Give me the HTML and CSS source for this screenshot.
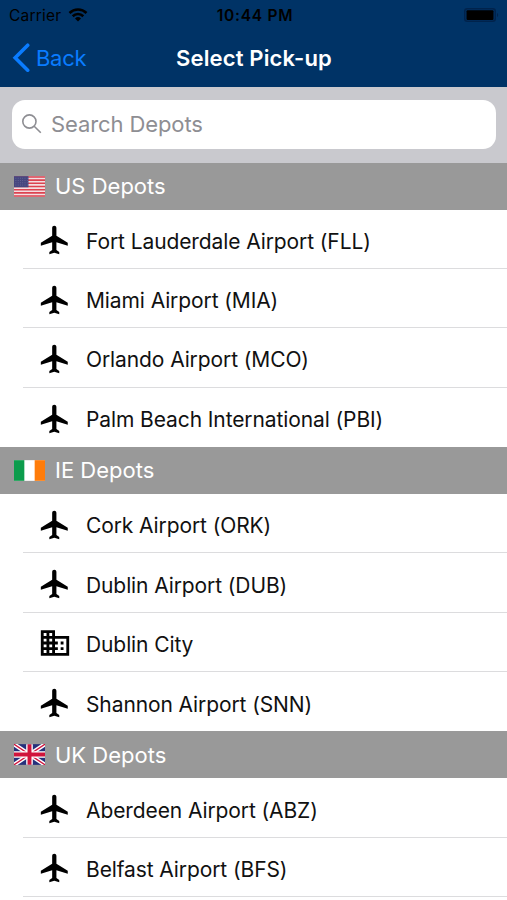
FILE: index.html
```html
<!DOCTYPE html>
<html lang="en">
<head>
    <meta charset="UTF-8">
    <meta name="viewport" content="width=device-width, initial-scale=1.0">
    <title>Select Pick-up</title>
    <link rel="stylesheet" href="styles.css">
</head>
<body>

    <svg class="sprite">
        <symbol id="plane" viewBox="0 0 24 24">
            <path d="M21 16v-2l-8-5V3.500c0-.83-.67-1.500-1.500-1.500S10 2.670 10 3.500V9l-8 5v2l8-2.500V19l-2 1.500V22l3.500-1 3.500 1v-1.500L13 19v-5.500l8 2.500z"/>
        </symbol>
        <symbol id="city" viewBox="0 0 24 24">
            <path d="M12 7V3H2v18h20V7H12zM6 19H4v-2h2v2zm0-4H4v-2h2v2zm0-4H4V9h2v2zm0-4H4V5h2v2zm4 12H8v-2h2v2zm0-4H8v-2h2v2zm0-4H8V9h2v2zm0-4H8V5h2v2zm10 12h-8v-2h2v-2h-2v-2h2v-2h-2V9h8v10zm-2-8h-2v2h2v-2zm0 4h-2v2h2v-2z"/>
        </symbol>
    </svg>

    <header>
        <div class="statusBar">
            <div class="carrier">
                <span>Carrier</span>
                <svg class="wifi" viewBox="0 0 20 14">
                    <path d="M1.500 5a12.200 12.200 0 0 1 17 0M4.700 8.200a7.600 7.600 0 0 1 10.600 0" fill="none" stroke="#000" stroke-width="2.600"/>
                    <path d="M10 13.500l-3-3a4.300 4.300 0 0 1 6 0z"/>
                </svg>
            </div>
            <span class="time">10:44 PM</span>
            <svg class="battery" viewBox="0 0 36 14">
                <rect x=".75" y=".75" width="30.500" height="12.500" rx="2.500" fill="none" stroke="#00234c" stroke-width="1.500"/>
                <rect x="2.500" y="2.300" width="27" height="9.800" rx="1"/>
                <path d="M33 5c1.600.6 1.600 3.400 0 4z" fill="#00234c"/>
            </svg>
        </div>
        <div class="navBar">
            <a class="back" href="#">
                <svg viewBox="0 0 18 30"><path d="M15.700 2.200L3.200 14.700l12.500 12.500" fill="none" stroke="#0a7cff" stroke-width="3.600" stroke-linecap="round"/></svg>
                <span>Back</span>
            </a>
            <h1>Select Pick-up</h1>
        </div>
    </header>

    <div class="searchBar">
        <div class="searchField">
            <svg viewBox="0 0 20 20"><path d="M14 7.500a6.600 6.600 0 1 1-13.200 0a6.600 6.600 0 0 1 13.200 0zM12.200 12.200l6.600 6.600" fill="none" stroke="#8e8e93" stroke-width="1.600"/></svg>
            <span>Search Depots</span>
        </div>
    </div>

    <section>
        <h2>
            <svg class="flag" viewBox="0 0 30 20">
                <rect width="30" height="20" fill="#f3dfe2"/>
                <path d="M0 .77h30M0 3.850h30M0 6.920h30M0 10h30M0 13.080h30M0 16.150h30M0 19.230h30" stroke="#dc4350" stroke-width="1.540"/>
                <rect width="14" height="10.770" fill="#46467f"/>
                <path d="M1.500 2h12M1.500 4.200h12M1.500 6.400h12M1.500 8.600h12" stroke="#8587ad" stroke-width=".6" stroke-dasharray=".7 1.500"/>
            </svg>
            <span>US Depots</span>
        </h2>
        <ul>
            <li><svg class="icon"><use href="#plane"/></svg><span class="name">Fort Lauderdale Airport (FLL)</span></li>
            <li><svg class="icon"><use href="#plane"/></svg><span class="name">Miami Airport (MIA)</span></li>
            <li><svg class="icon"><use href="#plane"/></svg><span class="name">Orlando Airport (MCO)</span></li>
            <li><svg class="icon"><use href="#plane"/></svg><span class="name">Palm Beach International (PBI)</span></li>
        </ul>
    </section>

    <section>
        <h2>
            <svg class="flag" viewBox="0 0 30 20">
                <rect width="30" height="20" fill="#fff"/>
                <rect width="10" height="20" fill="#0c9c4c"/>
                <rect x="20" width="10" height="20" fill="#ff7c0a"/>
            </svg>
            <span>IE Depots</span>
        </h2>
        <ul>
            <li><svg class="icon"><use href="#plane"/></svg><span class="name">Cork Airport (ORK)</span></li>
            <li><svg class="icon"><use href="#plane"/></svg><span class="name">Dublin Airport (DUB)</span></li>
            <li><svg class="icon"><use href="#city"/></svg><span class="name">Dublin City</span></li>
            <li><svg class="icon"><use href="#plane"/></svg><span class="name">Shannon Airport (SNN)</span></li>
        </ul>
    </section>

    <section>
        <h2>
            <svg class="flag" viewBox="0 0 30 20">
                <rect width="30" height="20" fill="#25307c"/>
                <path d="M0 0l30 20M30 0L0 20" stroke="#fff" stroke-width="4"/>
                <path d="M0 0l30 20M30 0L0 20" stroke="#d0143c" stroke-width="1.300"/>
                <path d="M15 0v20M0 10h30" stroke="#fff" stroke-width="6.400"/>
                <path d="M15 0v20M0 10h30" stroke="#d0143c" stroke-width="3.800"/>
            </svg>
            <span>UK Depots</span>
        </h2>
        <ul class="more">
            <li><svg class="icon"><use href="#plane"/></svg><span class="name">Aberdeen Airport (ABZ)</span></li>
            <li><svg class="icon"><use href="#plane"/></svg><span class="name">Belfast Airport (BFS)</span></li>
        </ul>
    </section>

</body>
</html>
```
FILE: styles.css
```css
* {
    margin: 0px;
    padding: 0px;
    box-sizing: border-box;
}
body {
    font-family: Inter, "Liberation Sans", sans-serif;
    background-color: white;
    width: 100%;
}
.sprite {
    display: none;
}
svg {
    display: block;
    flex-shrink: 0;
}
header {
    background-color: #003366;
    height: 87px;
}
.statusBar {
    display: grid;
    grid-template-columns: 1fr auto 1fr;
    align-items: center;
    height: 30px;
    padding: 0 7px 0 9px;
    font-size: 15.5px;
    letter-spacing: 0.2px;
}
.carrier {
    display: flex;
    align-items: center;
    gap: 7px;
}
.wifi {
    width: 20px;
    height: 14px;
}
.time {
    font-weight: 600;
    font-size: 15.5px;
    letter-spacing: 0.75px;
    padding-left: 1px;
}
.battery {
    width: 36px;
    height: 14px;
    justify-self: end;
}
.navBar {
    display: grid;
    grid-template-columns: 1fr auto 1fr;
    align-items: center;
    height: 56px;
    padding: 0 11px 0 12px;
}
.back {
    display: flex;
    align-items: center;
    gap: 6px;
    color: #0a7cff;
    font-size: 22px;
    letter-spacing: -0.3px;
    text-decoration: none;
}
.back svg {
    width: 18px;
    height: 30px;
}
h1 {
    color: white;
    font-size: 22px;
    font-weight: 600;
    letter-spacing: 0.15px;
}
.searchBar {
    background-color: #c9c9ce;
    height: 75.5px;
    padding: 13px 11px 0 12px;
}
.searchField {
    display: flex;
    align-items: center;
    gap: 9px;
    height: 49px;
    padding-left: 10px;
    padding-bottom: 1px;
    border-radius: 13px;
    background-color: white;
    color: #8e8e93;
    font-size: 22px;
    letter-spacing: -0.1px;
}
.searchField svg {
    width: 20px;
    height: 20px;
}
h2 {
    display: flex;
    align-items: center;
    gap: 11px;
    height: 47.2px;
    padding-left: 14px;
    background-color: #999999;
    color: white;
    font-size: 22px;
    font-weight: 400;
}
.flag {
    width: 31px;
    height: 21px;
    margin-right: -1px;
}
ul {
    list-style: none;
}
li {
    display: flex;
    align-items: center;
    gap: 14px;
    height: 59.3px;
    margin-left: 23px;
    padding-left: 15px;
    padding-top: 3px;
    border-bottom: 1px solid #dcdcde;
    font-size: 21px;
    letter-spacing: -0.1px;
    color: #111;
}
li:last-child {
    border-bottom: none;
}
.more li:last-child {
    border-bottom: 1px solid #dcdcde;
}
.name {
    padding-top: 2px;
}
.icon {
    width: 34px;
    height: 34px;
    fill: black;
}
```
